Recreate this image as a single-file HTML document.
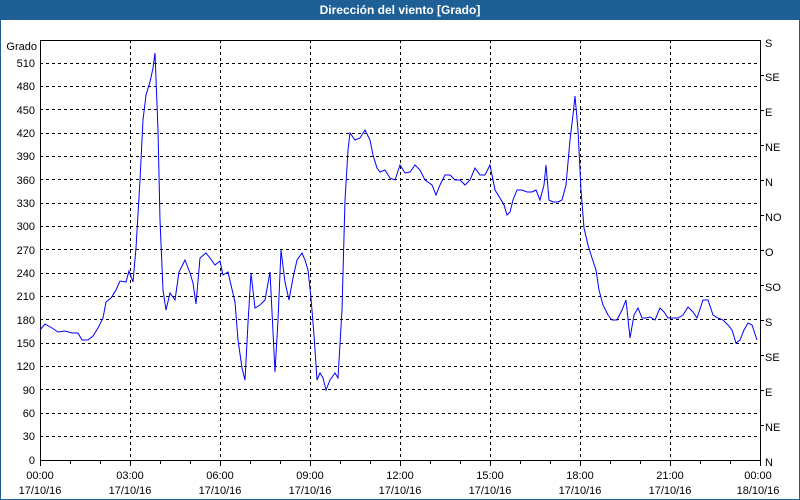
<!DOCTYPE html>
<html><head><style>
body{margin:0;width:800px;height:500px;overflow:hidden;background:#fff;font-family:"Liberation Sans",sans-serif}
</style></head><body>
<svg width="800" height="500" xmlns="http://www.w3.org/2000/svg" style="position:absolute;left:0;top:0" font-family="Liberation Sans, sans-serif" font-size="11">
<rect x="0.5" y="0.5" width="799" height="499" fill="#fff" stroke="#1e6096"/>
<rect x="0" y="0" width="800" height="20" fill="#1e6096"/>
<text x="400" y="14" fill="#fff" font-weight="bold" font-size="12" text-anchor="middle">Dirección del viento [Grado]</text>
<g stroke="#000" stroke-dasharray="3,3" stroke-width="1">
<path d="M40 436.5H760M40 413.5H760M40 389.5H760M40 366.5H760M40 343.5H760M40 319.5H760M40 296.5H760M40 273.5H760M40 249.5H760M40 226.5H760M40 203.5H760M40 179.5H760M40 156.5H760M40 133.5H760M40 109.5H760M40 86.5H760M40 63.5H760"/>
<path d="M130.5 40V460M220.5 40V460M310.5 40V460M400.5 40V460M490.5 40V460M580.5 40V460M670.5 40V460"/>
</g>
<g stroke="#000" fill="none">
<path d="M40.5 40V460.5H760.5V40M40 40.5H760"/>
<path d="M70.5 460v4M100.5 460v4M130.5 460v6M160.5 460v4M190.5 460v4M220.5 460v6M250.5 460v4M280.5 460v4M310.5 460v6M340.5 460v4M370.5 460v4M400.5 460v6M430.5 460v4M460.5 460v4M490.5 460v6M520.5 460v4M550.5 460v4M580.5 460v6M610.5 460v4M640.5 460v4M670.5 460v6M700.5 460v4M730.5 460v4M40.5 460v6M760.5 460v6"/>
<path d="M760 425.5h4M760 390.5h4M760 355.5h4M760 320.5h4M760 285.5h4M760 250.5h4M760 215.5h4M760 180.5h4M760 145.5h4M760 110.5h4M760 75.5h4"/>
</g>
<g text-anchor="end" fill="#000">
<text x="37" y="50">Grado</text>
<text x="35" y="67">510</text><text x="35" y="90">480</text><text x="35" y="114">450</text><text x="35" y="137">420</text><text x="35" y="160">390</text><text x="35" y="184">360</text><text x="35" y="207">330</text><text x="35" y="230">300</text><text x="35" y="254">270</text><text x="35" y="277">240</text><text x="35" y="300">210</text><text x="35" y="324">180</text><text x="35" y="347">150</text><text x="35" y="370">120</text><text x="35" y="394">90</text><text x="35" y="417">60</text><text x="35" y="440">30</text><text x="35" y="464">0</text>
</g>
<g fill="#000">
<text x="765" y="47">S</text><text x="765" y="81">SE</text><text x="765" y="116">E</text><text x="765" y="151">NE</text><text x="765" y="186">N</text><text x="765" y="221">NO</text><text x="765" y="256">O</text><text x="765" y="291">SO</text><text x="765" y="326">S</text><text x="765" y="361">SE</text><text x="765" y="396">E</text><text x="765" y="431">NE</text><text x="765" y="466">N</text>
</g>
<g text-anchor="middle" fill="#000">
<text x="40" y="479">00:00</text><text x="40" y="494">17/10/16</text>
<text x="130" y="479">03:00</text><text x="130" y="494">17/10/16</text>
<text x="220" y="479">06:00</text><text x="220" y="494">17/10/16</text>
<text x="310" y="479">09:00</text><text x="310" y="494">17/10/16</text>
<text x="400" y="479">12:00</text><text x="400" y="494">17/10/16</text>
<text x="490" y="479">15:00</text><text x="490" y="494">17/10/16</text>
<text x="580" y="479">18:00</text><text x="580" y="494">17/10/16</text>
<text x="670" y="479">21:00</text><text x="670" y="494">17/10/16</text>
<text x="758" y="479">00:00</text><text x="758" y="494">18/10/16</text>
</g>
<polyline fill="none" stroke="#0000ff" stroke-width="1" points="40,330 45,324 52,328 58,332 65,331 72,333 78,333 82,340 88,340 93,336 98,328 103,318 106,302 111,298 116,290 120,281 126,282 129,271 133,282 136,248 140,180 143,120 146,95 150,82 153,68 155,53 158,130 160,220 163,290 166,310 170,293 175,300 179,272 185,260 190,273 193,283 196,304 200,258 206,253 210,258 215,265 220,261 223,275 228,272 231,285 235,302 238,340 242,368 245,380 248,323 251,273 255,308 260,305 265,300 270,272 275,372 278,320 281,250 285,282 289,300 293,278 297,260 302,253 305,260 308,270 311,298 314,335 317,380 320,373 323,378 326,390 330,380 335,373 338,378 342,310 345,200 348,150 350,133 355,140 360,138 365,130 370,140 373,155 377,168 380,172 385,170 390,178 395,180 400,165 405,173 410,172 415,165 420,170 425,180 432,185 436,195 440,185 445,175 450,175 455,180 460,180 465,185 470,180 475,168 480,175 485,175 490,165 495,190 500,198 504,205 507,215 510,212 513,200 517,190 522,190 527,192 532,192 536,190 540,200 544,185 546,165 549,200 553,202 558,202 562,200 566,185 570,140 573,115 575,96 578,130 581,190 584,228 588,245 592,258 596,270 599,290 603,305 608,315 612,320 617,320 622,310 626,300 630,338 634,315 638,308 642,318 646,318 650,317 655,320 660,308 664,312 668,318 673,318 678,318 683,315 688,307 693,312 697,318 703,300 708,300 713,315 718,318 723,320 728,325 732,330 736,343 740,340 744,330 748,323 752,325 757,340"/>
</svg>
</body></html>
